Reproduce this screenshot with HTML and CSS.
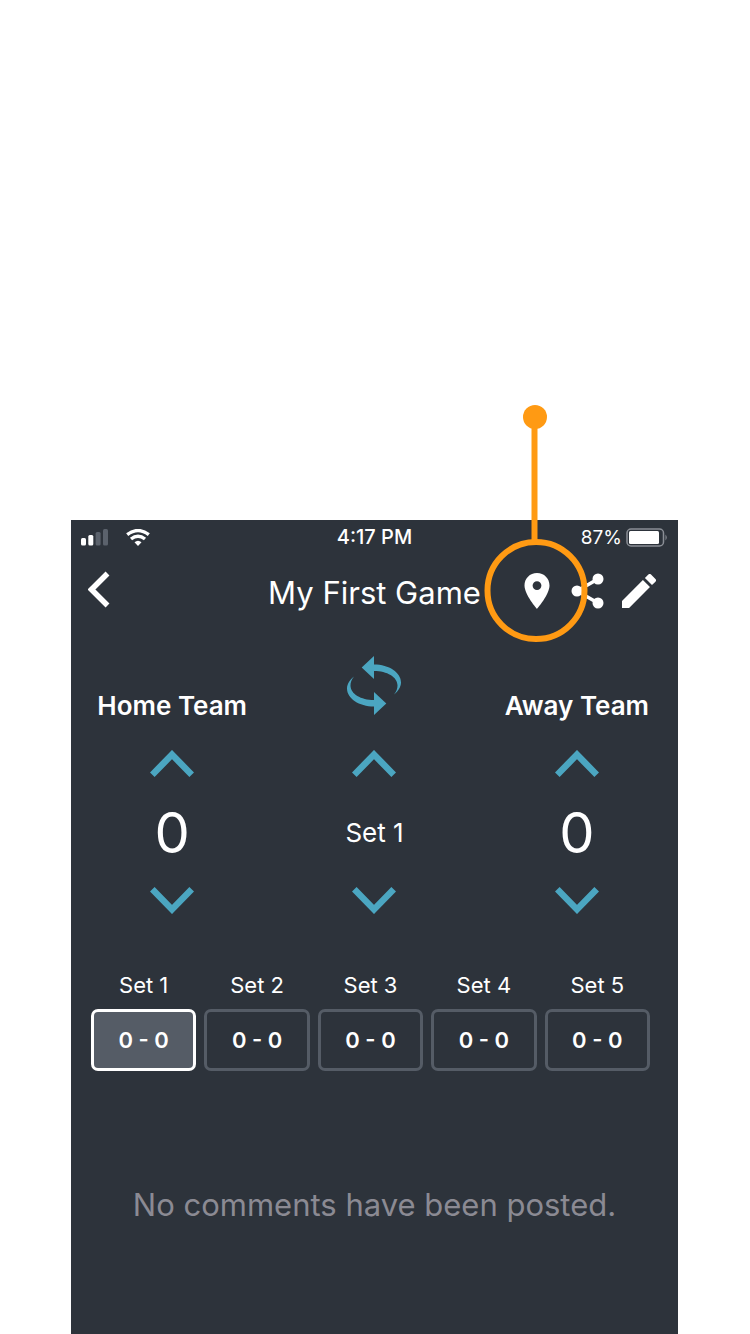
FILE: index.html
```
<!DOCTYPE html>
<html lang="en">
<head>
<meta charset="utf-8">
<meta name="viewport" content="width=device-width, initial-scale=1">
<title>My First Game</title>
<link rel="stylesheet" href="styles.css">
</head>
<body>
<svg class="defs" width="0" height="0" aria-hidden="true">
  <symbol id="up" viewBox="0 0 44 27"><path d="M2.3 24.7 22 4.6 41.7 24.7" fill="none" stroke="currentColor" stroke-width="6.5"/></symbol>
  <symbol id="down" viewBox="0 0 44 27"><path d="M2.3 2.3 22 22.4 41.7 2.3" fill="none" stroke="currentColor" stroke-width="6.5"/></symbol>
</svg>
<main class="phone">
  <div class="status">
    <div class="status-left">
      <svg width="27" height="17" viewBox="0 0 27 17" aria-label="Signal">
        <g fill="#fff"><rect x="0" y="9" width="5" height="7.500" rx="1.500"/><rect x="7.300" y="6" width="5" height="10.500" rx="1.500"/></g>
        <g fill="#5b626c"><rect x="14.600" y="3" width="5" height="13.500" rx="1.500"/><rect x="22" y="0" width="5" height="16.500" rx="1.500"/></g>
      </svg>
      <svg width="24" height="17" viewBox="0 0 24 17" aria-label="Wi-Fi">
        <g fill="none" stroke="#fff" stroke-width="3.400"><path d="M1.200 5.700Q12-2.600 22.800 5.700"/><path d="M5 10Q12 4.300 19 10"/></g>
        <path d="M8.500 13.300Q12 10 15.500 13.300L12 17Z" fill="#fff"/>
      </svg>
    </div>
    <div class="time">4:17 PM</div>
    <div class="status-right">
      <span class="percent">87%</span>
      <svg width="42" height="19" viewBox="0 0 42 19" aria-label="Battery">
        <rect x="1" y="1" width="36.500" height="17" rx="4" fill="none" stroke="#8b8f96" stroke-width="1.500"/>
        <rect x="3" y="3" width="30" height="13" rx="1.500" fill="#fff"/>
        <path d="M39.500 6.500Q42 9.500 39.500 12.500Z" fill="#8b8f96"/>
      </svg>
    </div>
  </div>

  <header class="bar">
    <div class="bar-side">
      <button class="icon-btn back" aria-label="Back">
        <svg width="22" height="37" viewBox="0 0 22 37"><path d="M19.500 2.500 3.500 18.500 19.500 34.500" fill="none" stroke="currentColor" stroke-width="5.500"/></svg>
      </button>
    </div>
    <h1 class="title">My First Game</h1>
    <div class="bar-side bar-actions">
      <button class="icon-btn" aria-label="Location">
        <svg width="26" height="36" viewBox="0 0 26 36"><path fill="currentColor" fill-rule="evenodd" d="M13 0C5.800 0 .5 5.500.5 12.500.5 21.500 13 36 13 36S25.500 21.500 25.500 12.500C25.500 5.500 20.200 0 13 0ZM13 8.200a4.400 4.400 0 1 1 0 8.800 4.400 4.400 0 0 1 0-8.800Z"/></svg>
      </button>
      <button class="icon-btn" aria-label="Share">
        <svg width="34" height="36" viewBox="0 0 34 36"><path d="M27 6 6 18 27 30" fill="none" stroke="currentColor" stroke-width="3.500"/><g fill="currentColor"><circle cx="27" cy="6" r="5.500"/><circle cx="6" cy="18" r="5.500"/><circle cx="27" cy="30" r="5.500"/></g></svg>
      </button>
      <button class="icon-btn" aria-label="Edit">
        <svg width="34" height="34" viewBox="3 3 18 18"><path fill="currentColor" d="M3 17.250V21h3.750L17.810 9.940l-3.750-3.750L3 17.250zM20.710 7.040a1 1 0 0 0 0-1.410l-2.340-2.340a1 1 0 0 0-1.410 0l-1.830 1.830 3.750 3.750 1.830-1.830z"/></svg>
      </button>
      <svg class="callout" width="104" height="238" viewBox="0 0 104 238" aria-hidden="true">
        <path d="M50.500 12V137" stroke="#ff9a13" stroke-width="6"/>
        <circle cx="51" cy="12" r="12" fill="#ff9a13"/>
        <circle cx="52" cy="185.500" r="48.500" fill="none" stroke="#ff9a13" stroke-width="6"/>
      </svg>
    </div>
  </header>

  <section class="scores">
    <div class="column">
      <div class="head"><h2 class="team">Home Team</h2></div>
      <button class="step" aria-label="Home score up"><svg width="44" height="27"><use href="#up"/></svg></button>
      <div class="value score">0</div>
      <button class="step" aria-label="Home score down"><svg width="44" height="27"><use href="#down"/></svg></button>
    </div>
    <div class="column">
      <div class="head">
        <button class="swap" aria-label="Swap sides">
          <svg width="54" height="59" viewBox="0 0 54 59" fill="currentColor">
            <path d="M14.700 11.500 27 0V8.500C42 8.500 54 16.500 54 26.500 54 31 51 35.500 47 38.500 49.500 35.500 50.500 32.500 50.500 29.500 50.500 21 40 15 27 15V23Z"/>
            <path d="M39.300 47.500 27 59V50.500C12 50.500 0 42.500 0 32.500 0 28 3 23.500 7 20.500 4.500 23.500 3.500 26.500 3.500 29.500 3.500 38 14 44 27 44V36Z"/>
          </svg>
        </button>
      </div>
      <button class="step" aria-label="Next set"><svg width="44" height="27"><use href="#up"/></svg></button>
      <div class="value">Set 1</div>
      <button class="step" aria-label="Previous set"><svg width="44" height="27"><use href="#down"/></svg></button>
    </div>
    <div class="column">
      <div class="head"><h2 class="team">Away Team</h2></div>
      <button class="step" aria-label="Away score up"><svg width="44" height="27"><use href="#up"/></svg></button>
      <div class="value score">0</div>
      <button class="step" aria-label="Away score down"><svg width="44" height="27"><use href="#down"/></svg></button>
    </div>
  </section>

  <section class="sets">
    <div class="set"><span id="s1">Set 1</span><button class="set-btn active" aria-describedby="s1">0 - 0</button></div>
    <div class="set"><span id="s2">Set 2</span><button class="set-btn" aria-describedby="s2">0 - 0</button></div>
    <div class="set"><span id="s3">Set 3</span><button class="set-btn" aria-describedby="s3">0 - 0</button></div>
    <div class="set"><span id="s4">Set 4</span><button class="set-btn" aria-describedby="s4">0 - 0</button></div>
    <div class="set"><span id="s5">Set 5</span><button class="set-btn" aria-describedby="s5">0 - 0</button></div>
  </section>

  <p class="empty">No comments have been posted.</p>
</main>
</body>
</html>
```

FILE: styles.css
```
* { box-sizing: border-box; }
body {
  margin: 0;
  min-height: 100vh;
  padding: 520px 72px 0 71px;
  display: flex;
  flex-direction: column;
  background: #fff;
  font-family: Inter, "Liberation Sans", sans-serif;
  color: #fff;
}
.defs { position: absolute; }
svg { display: block; flex: none; }
h1, h2, p { margin: 0; }
button {
  margin: 0;
  padding: 0;
  border: 0;
  background: none;
  color: inherit;
  font: inherit;
  cursor: pointer;
}
.phone { flex: 1; background: #2d333b; }

.status {
  display: grid;
  grid-template-columns: 1fr auto 1fr;
  align-items: center;
  height: 34px;
  padding: 0 10px;
  font-size: 20px;
}
.status-left { display: flex; gap: 18px; }
.time { font-weight: 500; }
.percent { font-size: 19px; }
.status-right {
  display: flex;
  align-items: center;
  justify-content: flex-end;
  gap: 4px;
}

.bar {
  display: grid;
  grid-template-columns: 1fr auto 1fr;
  align-items: center;
  height: 74px;
}
.bar-side { display: flex; padding-left: 2px; }
.bar-actions { position: relative; justify-content: flex-end; padding-right: 14px; }
.title { padding-top: 4px; font-size: 31px; font-weight: 400; line-height: 40px; }
.icon-btn {
  display: flex;
  align-items: center;
  justify-content: center;
  width: 51px;
  height: 52px;
}
.back { padding-bottom: 3px; }
.callout { position: absolute; right: 90px; bottom: -26px; pointer-events: none; }

.scores { display: grid; grid-template-columns: repeat(3, 1fr); padding-top: 28px; }
.column { display: flex; flex-direction: column; align-items: center; }
.head { display: flex; align-items: flex-end; height: 73px; }
.team { padding-bottom: 3px; font-size: 26px; font-weight: 600; line-height: 40px; }
.swap { align-self: flex-start; color: #4ba6c1; }
.step {
  display: flex;
  align-items: center;
  justify-content: center;
  width: 96px;
  height: 68px;
  color: #4ba6c1;
}
.value { height: 69px; font-size: 26px; line-height: 72px; }
.score { font-size: 56px; font-weight: 400; }

.sets {
  display: grid;
  grid-template-columns: repeat(5, 1fr);
  gap: 8px;
  padding: 35px 28px 0 20px;
}
.set {
  display: flex;
  flex-direction: column;
  gap: 8px;
  font-size: 22px;
  line-height: 32px;
  text-align: center;
}
.set-btn {
  height: 62px;
  border: 3px solid #555c66;
  border-radius: 7px;
  font-weight: 600;
}
.set-btn.active { border-color: #fff; background: #555c66; }

.empty {
  padding: 114px 16px 40px;
  color: #8b8a93;
  font-size: 31px;
  line-height: 40px;
  text-align: center;
}
```
